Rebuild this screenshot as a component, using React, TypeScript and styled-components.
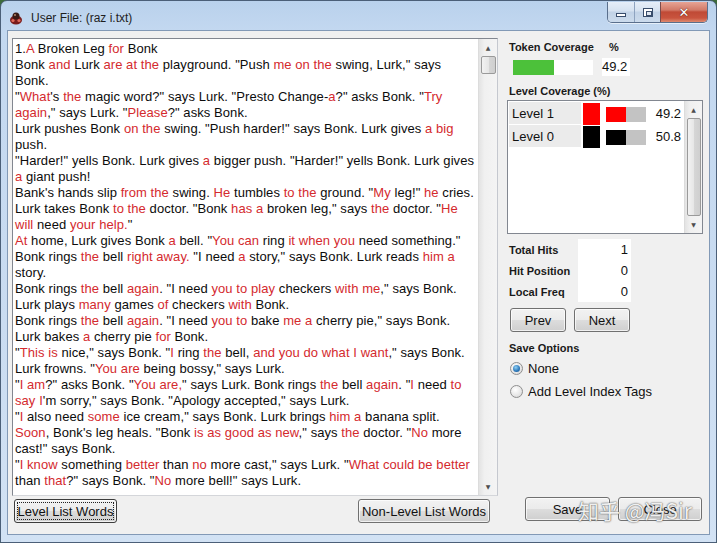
import * as React from 'react'
import styled, { createGlobalStyle } from 'styled-components'

const GlobalStyle = createGlobalStyle`
  html, body { margin: 0; padding: 0; background: #3d6b3a; }
  body { font-family: 'Liberation Sans', Arial, sans-serif; }
  * { box-sizing: border-box; }
`

// story text, {..} marks the red (level list) words
const story: string[] = [
  '1.{A} Broken Leg {for} Bonk',
  'Bonk {and} Lurk {are at the} playground. "Push {me on the} swing, Lurk," says',
  'Bonk.',
  '"{What}\'s {the} magic word?" says Lurk. "Presto Change-{a}?" asks Bonk. "{Try}',
  '{again}," says Lurk. "{Please}?" asks Bonk.',
  'Lurk pushes Bonk {on the} swing. "Push harder!" says Bonk. Lurk gives {a big}',
  'push.',
  '"Harder!" yells Bonk. Lurk gives {a} bigger push. "Harder!" yells Bonk. Lurk gives',
  '{a} giant push!',
  'Bank\'s hands slip {from the} swing. {He} tumbles {to the} ground. "{My} leg!" {he} cries.',
  'Lurk takes Bonk {to the} doctor. "Bonk {has a} broken leg," says {the} doctor. "{He}',
  '{will} need {your help.}"',
  '{At} home, Lurk gives Bonk {a} bell. "{You can} ring {it when you} need something."',
  'Bonk rings {the} bell {right away.} "I need {a} story," says Bonk. Lurk reads {him a}',
  'story.',
  'Bonk rings {the} bell {again}. "I need {you to play} checkers {with me}," says Bonk.',
  'Lurk plays {many} games {of} checkers {with} Bonk.',
  'Bonk rings {the} bell {again}. "I need {you to} bake {me a} cherry pie," says Bonk.',
  'Lurk bakes {a} cherry pie {for} Bonk.',
  '"{This is} nice," says Bonk. "{I} ring {the} bell, {and you do what I want}," says Bonk.',
  'Lurk frowns. "{You are} being bossy," says Lurk.',
  '"{I am}?" asks Bonk. "{You are,}" says Lurk. Bonk rings {the} bell {again}. "{I} need {to}',
  '{say} {I}\'m sorry," says Bonk. "Apology accepted," says Lurk.',
  '"{I} also need {some} ice cream," says Bonk. Lurk brings {him a} banana split.',
  '{Soon}, Bonk\'s leg heals. "Bonk {is as good as new}," says {the} doctor. "{No} more',
  'cast!" says Bonk.',
  '"{I know} something {better} than {no} more cast," says Lurk. "{What could be better}',
  'than {that}?" says Bonk. "{No} more bell!" says Lurk.',
]

const levels = [
  { name: 'Level 1', color: '#ff0000', pct: 49.2 },
  { name: 'Level 0', color: '#000000', pct: 50.8 },
]

const Window = styled.div`
  position: relative;
  width: 717px;
  height: 543px;
  border: 1px solid #4b5f78;
  border-radius: 7px 7px 0 0;
  background: linear-gradient(180deg, #b9d1ec 0px, #c3d8f0 30px, #cadcf1 60%, #d2e2f4 100%);
  padding: 0 6px 7px 6px;
  display: flex;
  flex-direction: column;
  overflow: hidden;
`

const TitleBar = styled.div`
  height: 29px;
  display: flex;
  align-items: flex-start;
`

const TitleIcon = styled.svg`
  margin: 10px 0 0 2px;
  width: 14px;
  height: 14px;
  flex: none;
`

const TitleText = styled.div`
  margin: 10px 0 0 8px;
  font-family: 'Liberation Sans', Arial, sans-serif;
  font-size: 12px;
  line-height: 14px;
  color: #1e1e1e;
  flex: 1;
`

const CaptionGroup = styled.div`
  display: flex;
  height: 21px;
  margin: 1px 2px 0 0;
  border: 1px solid #5a6f8c;
  border-top: none;
  border-radius: 0 0 5px 5px;
  overflow: hidden;
  box-shadow: 0 1px 0 rgba(255, 255, 255, 0.6);
`

const CaptionButton = styled.div<{ $w: number; $close?: boolean }>`
  width: ${({ $w }) => $w}px;
  display: flex;
  align-items: center;
  justify-content: center;
  border-left: ${({ $close }) => ($close ? '1px solid #7a4b4b' : '1px solid #8ea3bf')};
  &:first-child { border-left: none; }
  background: ${({ $close }) =>
    $close
      ? 'linear-gradient(180deg, #e7a495 0%, #d27a68 40%, #c04a36 50%, #c9543e 80%, #de8b70 100%)'
      : 'linear-gradient(180deg, #e6eef8 0%, #d6e2f0 45%, #c1d2e6 50%, #ccdbec 100%)'};
`

const MinGlyph = styled.div`
  width: 10px;
  height: 4px;
  margin-top: 5px;
  border: 1px solid #394d6b;
  background: #fff;
`

const MaxGlyph = styled.div`
  width: 10px;
  height: 9px;
  border: 1px solid #394d6b;
  background: #fff;
  padding: 2px 2px;
  &::after {
    content: '';
    display: block;
    width: 100%;
    height: 100%;
    border: 1px solid #394d6b;
    background: #dfe7f1;
  }
`

const CloseGlyph = styled.div`
  font-family: 'DejaVu Sans', sans-serif;
  font-weight: bold;
  font-size: 13px;
  line-height: 13px;
  color: #fff;
  text-shadow: 0 0 1px #5a1a10, 0 0 1px #5a1a10;
`

const Client = styled.div`
  flex: 1;
  background: #f0f0f0;
  border: 1px solid #8299b6;
  padding: 7px 6px 11px 4px;
  display: grid;
  grid-template-columns: 486px 196px;
  column-gap: 9px;
`

const LeftColumn = styled.div`
  display: flex;
  flex-direction: column;
`

const TextBox = styled.div`
  height: 458px;
  display: flex;
  border: 1px solid #828790;
  border-right-color: #c5c8cf;
  border-bottom-color: #d4d6da;
  background: #fff;
`

const StoryText = styled.div`
  flex: 1;
  padding: 2px 0 0 2px;
  font-family: 'Liberation Sans', Arial, sans-serif;
  font-size: 13px;
  letter-spacing: 0.07px;
  line-height: 16px;
  color: #0c0c0c;
  white-space: pre;
  overflow: hidden;
`

const Red = styled.span`
  color: #d42a2e;
`

const ScrollBar = styled.div<{ $w: number }>`
  width: ${({ $w }) => $w}px;
  flex: none;
  display: flex;
  flex-direction: column;
  background: linear-gradient(90deg, #e3e3e3, #f0f0f0 30%, #f4f4f4);
  border-left: 1px solid #dcdcdc;
`

const ScrollArrow = styled.div`
  height: 17px;
  flex: none;
  display: flex;
  align-items: center;
  justify-content: center;
  font-family: 'DejaVu Sans', sans-serif;
  font-size: 6px;
  color: #4d4d4d;
`

const ScrollTrack = styled.div`
  flex: 1;
  display: flex;
  flex-direction: column;
  align-items: center;
`

const ScrollThumb = styled.div<{ $top: number; $h: number }>`
  margin-top: ${({ $top }) => $top}px;
  width: calc(100% - 3px);
  height: ${({ $h }) => $h}px;
  border: 1px solid #9a9a9a;
  border-radius: 2px;
  background: linear-gradient(90deg, #f2f2f2 0%, #e6e6e6 50%, #d6d6d6 51%, #cfcfcf 100%);
`

const BottomRow = styled.div`
  display: flex;
  justify-content: space-between;
  margin-top: 3px;
  padding: 0 8px 0 2px;
`

const WinButton = styled.button<{ $w: number; $focused?: boolean }>`
  width: ${({ $w }) => $w}px;
  height: 24px;
  padding: 0;
  border: 1px solid ${({ $focused }) => ($focused ? '#3c3c3c' : '#707070')};
  border-radius: 3px;
  background: linear-gradient(180deg, #f2f2f2 0%, #ebebeb 49%, #dddddd 50%, #cfcfcf 100%);
  box-shadow: inset 0 0 0 1px rgba(255, 255, 255, 0.7);
  font-family: 'Liberation Sans', Arial, sans-serif;
  font-size: 13px;
  color: #111;
  display: flex;
  align-items: center;
  justify-content: center;
  outline: ${({ $focused }) => ($focused ? '1px dotted #222' : 'none')};
  outline-offset: -4px;
`

const RightColumn = styled.div`
  display: flex;
  flex-direction: column;
`

const Label = styled.div<{ $mt: number }>`
  margin-top: ${({ $mt }) => $mt}px;
  padding-left: 2px;
  height: 13px;
  font-family: 'Liberation Sans', Arial, sans-serif;
  font-weight: bold;
  font-size: 11px;
  line-height: 13px;
  color: #1a1a1a;
  white-space: pre;
`

const TokenRow = styled.div`
  margin-top: 4px;
  height: 18px;
  display: flex;
  align-items: center;
`

const TokenBar = styled.div`
  margin-left: 6px;
  width: 80px;
  height: 15px;
  background: #fff;
  display: flex;
`

const BarFill = styled.div<{ $color: string }>`
  height: 100%;
  background: ${({ $color }) => $color};
`

const ValueBox = styled.div`
  margin-left: 9px;
  width: 28px;
  height: 18px;
  background: #fff;
  text-align: right;
  padding-right: 3px;
  font-size: 13px;
  line-height: 18px;
  color: #111;
`

const ListBox = styled.div`
  margin-top: 2px;
  height: 134px;
  display: flex;
  border: 1px solid #828790;
  background: #fff;
`

const ListRows = styled.div`
  flex: 1;
  padding: 1px 0 0 1px;
  display: grid;
  grid-template-rows: repeat(2, 23px);
  align-content: start;
`

const LevelRow = styled.div`
  display: grid;
  grid-template-columns: 72px 17px 46px 31px;
  column-gap: 2px;
  align-items: stretch;
  font-size: 13px;
  color: #111;
`

const LevelName = styled.div`
  background: #ebebeb;
  padding-left: 3px;
  margin-bottom: 1px;
  display: flex;
  align-items: center;
`

const Swatch = styled.div<{ $color: string }>`
  background: ${({ $color }) => $color};
  margin-top: 1px;
`

const MiniBar = styled.div`
  margin: 5px 0 3px 4px;
  width: 40px;
  background: #c3c3c3;
  display: flex;
`

const LevelValue = styled.div`
  text-align: right;
  display: flex;
  align-items: center;
  justify-content: flex-end;
`

const StatsGrid = styled.div`
  margin-top: 5px;
  display: grid;
  grid-template-columns: 71px 53px;
  grid-template-rows: repeat(3, 21px);
`

const StatLabel = styled.div`
  padding-left: 2px;
  font-weight: bold;
  font-size: 11px;
  display: flex;
  align-items: center;
  color: #1a1a1a;
`

const StatValue = styled.div`
  background: #fff;
  text-align: right;
  padding-right: 3px;
  font-size: 13px;
  display: flex;
  align-items: center;
  justify-content: flex-end;
  color: #111;
`

const NavRow = styled.div`
  margin-top: 6px;
  padding-left: 3px;
  display: flex;
  gap: 8px;
`

const RadioRow = styled.div<{ $mt: number }>`
  margin-top: ${({ $mt }) => $mt}px;
  height: 18px;
  padding-left: 3px;
  display: flex;
  align-items: center;
  gap: 5px;
  font-size: 13px;
  color: #111;
`

const RadioDot = styled.div<{ $on?: boolean }>`
  width: 13px;
  height: 13px;
  border-radius: 50%;
  border: 1px solid #8f8f8f;
  background: radial-gradient(circle at 40% 35%, #ffffff, #e6e6e6 60%, #cfcfcf);
  display: flex;
  align-items: center;
  justify-content: center;
  &::after {
    content: '';
    display: ${({ $on }) => ($on ? 'block' : 'none')};
    width: 7px;
    height: 7px;
    border-radius: 50%;
    background: radial-gradient(circle at 40% 35%, #8fd0f5, #2a76b8 60%, #1b4f86);
  }
`

const DialogButtons = styled.div`
  margin-top: auto;
  margin-bottom: 2px;
  padding-left: 18px;
  display: flex;
  gap: 8px;
`

const Watermark = styled.div`
  position: absolute;
  left: 577px;
  top: 496px;
  font-family: 'Noto Sans CJK SC', sans-serif;
  font-size: 21px;
  line-height: 26px;
  color: rgba(255, 255, 255, 0.92);
  text-shadow: 0 0 1px #555, 0 0 2px #777;
  white-space: pre;
`

const StoryLine = ({ src }: { src: string }) => (
  <div>
    {src.split(/(\{[^}]*\})/).map((part, i) =>
      part.startsWith('{') ? <Red key={i}>{part.slice(1, -1)}</Red> : <React.Fragment key={i}>{part}</React.Fragment>
    )}
    {'\n'}
  </div>
)

const VScroll = ({ w, top, h }: { w: number; top: number; h: number }) => (
  <ScrollBar $w={w}>
    <ScrollArrow>▲</ScrollArrow>
    <ScrollTrack>
      <ScrollThumb $top={top} $h={h} />
    </ScrollTrack>
    <ScrollArrow>▼</ScrollArrow>
  </ScrollBar>
)

export default function App() {
  return (
    <>
      <GlobalStyle />
      <Window>
        <TitleBar>
          <TitleIcon viewBox="0 0 14 14">
            <ellipse cx="7" cy="9" rx="6" ry="4.5" fill="#7a1c1c" />
            <circle cx="7" cy="5" r="3.5" fill="#3a1a14" />
            <circle cx="4" cy="9.5" r="1.6" fill="#e06a5a" />
            <circle cx="10" cy="9.5" r="1.6" fill="#e06a5a" />
            <circle cx="6" cy="4" r="1" fill="#b7886a" />
          </TitleIcon>
          <TitleText>User File: (raz i.txt)</TitleText>
          <CaptionGroup>
            <CaptionButton $w={26}>
              <MinGlyph />
            </CaptionButton>
            <CaptionButton $w={26}>
              <MaxGlyph />
            </CaptionButton>
            <CaptionButton $w={47} $close>
              <CloseGlyph>✕</CloseGlyph>
            </CaptionButton>
          </CaptionGroup>
        </TitleBar>

        <Client>
          <LeftColumn>
            <TextBox>
              <StoryText>
                {story.map((line, i) => (
                  <StoryLine key={i} src={line} />
                ))}
              </StoryText>
              <VScroll w={19} top={0} h={18} />
            </TextBox>
            <BottomRow>
              <WinButton $w={103} $focused>Level List Words</WinButton>
              <WinButton $w={132}>Non-Level List Words</WinButton>
            </BottomRow>
          </LeftColumn>

          <RightColumn>
            <Label $mt={3}>{'Token Coverage     %'}</Label>
            <TokenRow>
              <TokenBar>
                <BarFill $color="#4cc13a" style={{ width: '41px' }} />
              </TokenBar>
              <ValueBox>49.2</ValueBox>
            </TokenRow>

            <Label $mt={9}>Level Coverage (%)</Label>
            <ListBox>
              <ListRows>
                {levels.map((lv) => (
                  <LevelRow key={lv.name}>
                    <LevelName>{lv.name}</LevelName>
                    <Swatch $color={lv.color} />
                    <MiniBar>
                      <BarFill $color={lv.color} style={{ width: `${(lv.pct / 100) * 40}px` }} />
                    </MiniBar>
                    <LevelValue>{lv.pct.toFixed(1)}</LevelValue>
                  </LevelRow>
                ))}
              </ListRows>
              <VScroll w={18} top={0} h={98} />
            </ListBox>

            <StatsGrid>
              <StatLabel>Total Hits</StatLabel>
              <StatValue>1</StatValue>
              <StatLabel>Hit Position</StatLabel>
              <StatValue>0</StatValue>
              <StatLabel>Local Freq</StatLabel>
              <StatValue>0</StatValue>
            </StatsGrid>

            <NavRow>
              <WinButton $w={56}>Prev</WinButton>
              <WinButton $w={56}>Next</WinButton>
            </NavRow>

            <Label $mt={10}>Save Options</Label>
            <RadioRow $mt={4}>
              <RadioDot $on />
              None
            </RadioRow>
            <RadioRow $mt={5}>
              <RadioDot />
              Add Level Index Tags
            </RadioRow>

            <DialogButtons>
              <WinButton $w={85}>Save</WinButton>
              <WinButton $w={84}>Close</WinButton>
            </DialogButtons>
          </RightColumn>
        </Client>
        <Watermark>{'知乎 @冯Sir'}</Watermark>
      </Window>
    </>
  )
}
